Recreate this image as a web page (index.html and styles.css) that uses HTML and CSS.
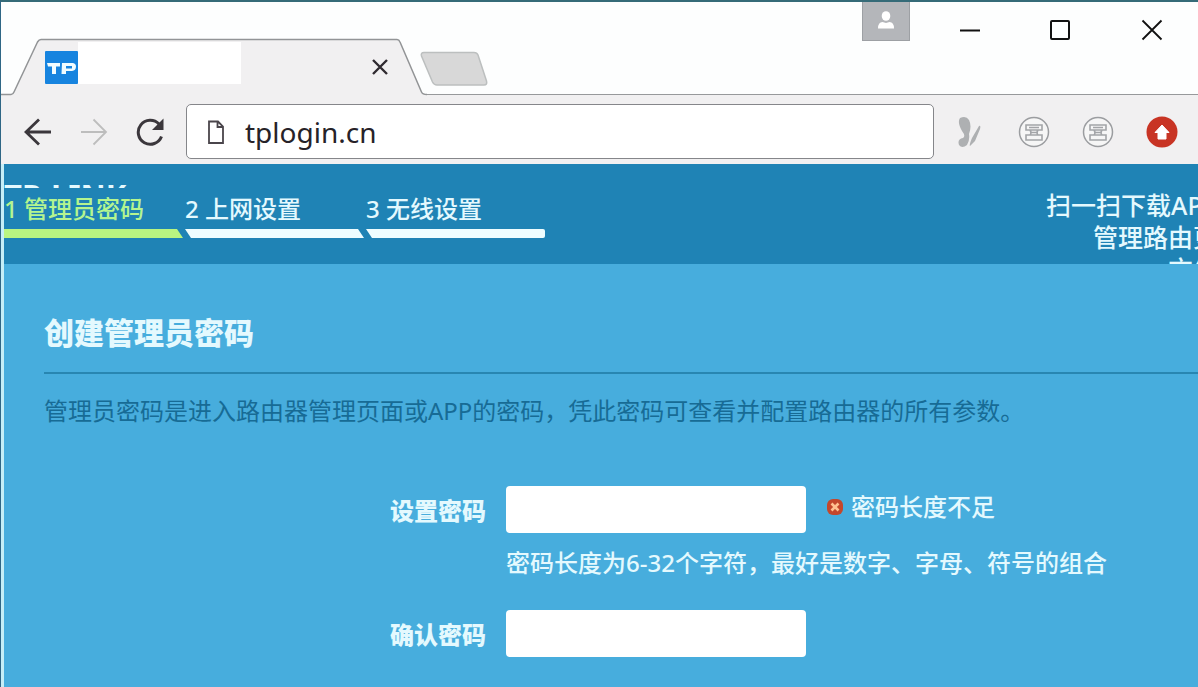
FILE: index.html
```html
<!DOCTYPE html>
<html lang="zh-CN">
<head>
<meta charset="utf-8">
<meta name="viewport" content="width=device-width, initial-scale=1">
<title>tplogin.cn</title>
<link rel="stylesheet" href="styles.css">
</head>
<body>
<div class="window">
  <div class="titlebar">
    <div class="tab">
      <svg class="tab-shape" width="426" height="58" viewBox="0 0 426 58" aria-hidden="true">
        <path d="M0 58V56.500H10Q12 56.500 13 54L36.500 4Q38 1.500 40 1.500H396Q398 1.500 399 4L420.500 54Q421.500 56.500 426 56.500V58Z" fill="#f1f0f1"/>
        <path d="M0 56.500H10Q12 56.500 13 54L36.500 4Q38 1.500 40 1.500H396Q398 1.500 399 4L420.500 54Q421.500 56.500 426 56.500" fill="none" stroke="#929496" stroke-width="1.500"/>
      </svg>
      <svg class="favicon" width="33" height="33" viewBox="0 0 33 33" aria-label="TP" role="img">
        <rect width="33" height="33" rx="1" fill="#1784df"/>
        <path d="M2 12H15V15.500H11V23H7V15.500H3Z" fill="#f1fcff"/>
        <path fill-rule="evenodd" d="M17 12H28Q31 12.500 31 15.500Q31 19.500 27 20H21V23H16.500ZM21 15V17.500H27V15Z" fill="#f1fcff"/>
      </svg>
      <span class="tab-title"></span>
      <button class="tab-close" aria-label="关闭标签页">
        <svg width="18" height="18" viewBox="0 0 18 18"><path d="M2 2L16 16M16 2L2 16" stroke="#302b31" stroke-width="2.400" fill="none"/></svg>
      </button>
    </div>
    <button class="new-tab" aria-label="新标签页">
      <svg width="68" height="36" viewBox="0 0 68 36"><path d="M4 1.500H54Q57 1.500 58 4L66.500 30Q67.500 34 64 34H17Q14 34 12.500 31L1.500 5Q.5 1.500 4 1.500Z" fill="#d8d8d8" stroke="#bcbfbf" stroke-width="1.500"/></svg>
    </button>
    <div class="window-buttons">
      <button class="profile" aria-label="用户">
        <svg width="18" height="20" viewBox="0 0 18 20"><ellipse cx="9" cy="5" rx="4.300" ry="4.800" fill="#fff"/><path d="M1 17.500Q1 11 5.500 11L9 12L12.500 11Q17 11 17 17.500Z" fill="#fff"/></svg>
      </button>
      <button class="win-button" aria-label="最小化"><svg width="22" height="22" viewBox="0 0 22 22"><path d="M1 11.500H21" stroke="#111" stroke-width="2"/></svg></button>
      <button class="win-button" aria-label="最大化"><svg width="22" height="22" viewBox="0 0 22 22"><rect x="1" y="2" width="18" height="18" rx="1" fill="none" stroke="#111" stroke-width="2"/></svg></button>
      <button class="win-button" aria-label="关闭"><svg width="22" height="22" viewBox="0 0 22 22"><path d="M1.500 1.500L20.500 20.500M20.500 1.500L1.500 20.500" stroke="#111" stroke-width="1.800"/></svg></button>
    </div>
  </div>

  <div class="toolbar">
    <button class="nav-button" aria-label="后退"><svg width="28" height="28" viewBox="0 0 28 28"><path d="M27 14H2M15 1.500L2 14L15 26.500" fill="none" stroke="#3b373c" stroke-width="2.800"/></svg></button>
    <button class="nav-button" aria-label="前进"><svg width="28" height="28" viewBox="0 0 28 28"><path d="M1 14H26M13.500 1.500L26 14L13.500 26.500" fill="none" stroke="#bdbdbd" stroke-width="1.800"/></svg></button>
    <button class="nav-button" aria-label="刷新"><svg width="28" height="28" viewBox="0 0 28 28"><path d="M23 6A12 12 0 1 0 25.500 18.500" fill="none" stroke="#3b373c" stroke-width="3"/><path d="M27.500 .5V12H16Z" fill="#3b373c"/></svg></button>
    <div class="address">
      <svg width="18" height="26" viewBox="0 0 18 26" aria-hidden="true"><path d="M2 2.500H11L16 7.500V24H2ZM10.500 2.500V8H16" fill="none" stroke="#4a454b" stroke-width="1.800"/></svg>
      <input class="address-input" type="text" value="tplogin.cn" aria-label="地址栏">
    </div>
    <div class="extensions">
      <button class="extension" aria-label="扩展一"><svg width="32" height="32" viewBox="0 0 32 32"><path d="M6 2Q12 -1 15 4Q18 10 15 18Q16 24 13 29Q8 33 5 29Q3 23 9 22Q12 20 8 15Q3 6 6 2ZM25 10Q27 9 26 13L21 25L16 30Q15 29 18 22Z" fill="#aeb0b2"/></svg></button>
      <button class="extension" aria-label="扩展二"><svg width="32" height="32" viewBox="0 0 32 32"><circle cx="16" cy="16" r="14.500" fill="#f6f6f6" stroke="#9b9da0" stroke-width="1.500"/><path d="M8 9H24V14H8ZM8 19H24V24H8ZM12 14Q14 16.500 12 19M20 14Q18 16.500 20 19M12 16.500H20M11 11.500H21" fill="none" stroke="#a3a5a8" stroke-width="1.600"/></svg></button>
      <button class="extension" aria-label="扩展三"><svg width="32" height="32" viewBox="0 0 32 32"><circle cx="16" cy="16" r="14.500" fill="#f6f6f6" stroke="#9b9da0" stroke-width="1.500"/><path d="M8 9H24V14H8ZM8 19H24V24H8ZM12 14Q14 16.500 12 19M20 14Q18 16.500 20 19M12 16.500H20M11 11.500H21" fill="none" stroke="#a3a5a8" stroke-width="1.600"/></svg></button>
      <button class="extension" aria-label="更新"><svg width="32" height="32" viewBox="0 0 32 32"><circle cx="16" cy="16" r="15.500" fill="#c83424"/><path d="M16 9L23 16.500H20V23H12V16.500H9Z" fill="#fff" stroke="#fff" stroke-width="1"/></svg></button>
    </div>
  </div>

  <div class="page">
    <header class="site-header">
      <div class="setup">
        <div class="logo">TP-LINK</div>
        <ol class="steps">
          <li class="step step-current">1 管理员密码</li>
          <li class="step">2 上网设置</li>
          <li class="step">3 无线设置</li>
        </ol>
      </div>
      <p class="app-note">扫一扫下载APP<br>管理路由更<br>方便</p>
    </header>
    <main class="content">
      <h1 class="heading">创建管理员密码</h1>
      <p class="description">管理员密码是进入路由器管理页面或APP的密码，凭此密码可查看并配置路由器的所有参数。</p>
      <form class="form">
        <label class="label" for="password">设置密码</label>
        <div class="field">
          <input class="input" id="password" type="password">
          <span class="error">
            <svg width="16" height="18" viewBox="0 0 16 18" aria-hidden="true"><rect y="1" width="16" height="16" rx="6" fill="#c4472c"/><path d="M4.500 5.500L11.500 12.500M11.500 5.500L4.500 12.500" stroke="#ffc08f" stroke-width="2.600"/></svg>
            密码长度不足
          </span>
        </div>
        <p class="hint">密码长度为6-32个字符，最好是数字、字母、符号的组合</p>
        <label class="label" for="confirm">确认密码</label>
        <div class="field"><input class="input" id="confirm" type="password"></div>
      </form>
    </main>
  </div>
</div>
</body>
</html>
```
FILE: styles.css
```css
* { box-sizing: border-box; }

body {
  margin: 0;
  color: #e4f9fe;
  font-family: "Noto Sans", "Noto Sans CJK SC", sans-serif;
  font-size: 24px;
  font-weight: 500;
}

button {
  padding: 0;
  border: 0;
  background: none;
}

svg { display: block; flex: none; }

.window {
  display: flex;
  flex-direction: column;
  min-height: 100vh;
  overflow: hidden;
  border-top: 2px solid #356b78;
  border-left: 1px solid #2f6685;
  background: #f1f0f1;
}

.titlebar {
  display: flex;
  height: 93px;
  border-bottom: 1px solid #97999b;
  background: #fdfefe;
}

.tab {
  position: relative;
  display: flex;
  align-items: center;
  width: 426px;
  height: 58px;
  margin-top: 36px;
  padding-left: 44px;
}

.tab-shape { position: absolute; top: 0; left: 0; }

.favicon { position: relative; }

.tab-title {
  position: relative;
  width: 163px;
  height: 42px;
  margin-bottom: 8px;
  background: #fff;
}

.tab-close { position: relative; margin-left: 130px; }

.new-tab { align-self: flex-end; margin: 0 0 7px -7px; }

.window-buttons {
  display: flex;
  gap: 69px;
  margin-left: auto;
  padding-right: 35px;
}

.profile {
  display: flex;
  justify-content: center;
  width: 48px;
  height: 39px;
  margin-right: -20px;
  padding-top: 9px;
  border: 1px solid #9da0a4;
  border-top: 0;
  background: #b4b6ba;
}

.win-button { height: 22px; margin-top: 17px; }

.toolbar {
  display: flex;
  align-items: center;
  height: 69px;
  padding: 4px 20px 0 23px;
  background: #f1f0f1;
}

.nav-button { margin-right: 28px; }

.nav-button:nth-child(3) { margin-right: 22px; }

.address {
  display: flex;
  flex: 1;
  align-items: center;
  gap: 20px;
  min-width: 0;
  height: 55px;
  padding-left: 20px;
  border: 1px solid #85868a;
  border-radius: 5px;
  background: #fff;
}

.address-input {
  flex: 1;
  min-width: 0;
  padding: 0;
  border: 0;
  outline: 0;
  background: none;
  color: #262228;
  font: 28px/36px "Noto Sans", sans-serif;
}

.extensions {
  display: flex;
  gap: 32px;
  margin-left: 20px;
}

.page {
  display: flex;
  flex: 1;
  flex-direction: column;
  border-left: 3px solid #c5eef7;
  background: #47addd;
}

.site-header {
  display: flex;
  justify-content: space-between;
  height: 100px;
  overflow: hidden;
  background: #1f83b5;
}

.setup { padding-top: 19px; }

.logo {
  height: 5px;
  overflow: hidden;
  font-size: 31px;
  font-weight: 700;
  line-height: 24px;
}

.steps {
  display: flex;
  gap: 2px;
  margin: 0;
  padding: 0;
  list-style: none;
}

.step {
  width: 179px;
  line-height: 41px;
}

.step::after {
  content: "";
  display: block;
  height: 9px;
  background: #eefdff;
  clip-path: polygon(0 0, 173px 0, 100% 100%, 6px 100%);
}

.step-current { color: #b4f58f; }

.step-current::after {
  background: #b9f581;
  clip-path: polygon(0 0, 173px 0, 100% 100%, 0 100%);
}

.step:last-child::after {
  border-radius: 0 2px 2px 0;
  clip-path: polygon(0 0, 100% 0, 100% 100%, 6px 100%);
}

.app-note {
  margin: 25px -20px 0 0;
  font-size: 25px;
  line-height: 32px;
  text-align: right;
  white-space: nowrap;
}

.content { padding: 47px 0 28px 40px; }

.heading {
  margin: 0;
  padding-bottom: 17px;
  border-bottom: 2px solid #2886b1;
  font-size: 30px;
  font-weight: 900;
  line-height: 44px;
}

.description {
  margin: 18px 0 56px;
  color: #176b95;
  font-weight: 400;
  line-height: 38px;
}

.form {
  display: grid;
  grid-template-columns: 442px 1fr;
  column-gap: 20px;
  align-items: center;
}

.label { font-weight: 900; text-align: right; }

.field { display: flex; align-items: flex-start; }

.input {
  width: 300px;
  height: 47px;
  padding: 0 12px;
  border: 0;
  border-radius: 4px;
  outline: 0;
  background: #fff;
  font-size: 24px;
}

.error {
  display: flex;
  align-items: center;
  gap: 8px;
  margin-left: 21px;
  line-height: 42px;
}

.hint {
  grid-column: 2;
  margin: 11px 0 28px;
  line-height: 38px;
}
```
